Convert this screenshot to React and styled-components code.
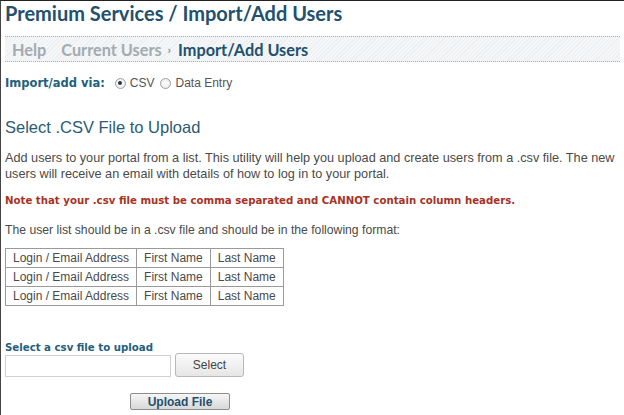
import React from "react";
import styled, { createGlobalStyle } from "styled-components";

const GlobalStyle = createGlobalStyle`
  html, body {
    margin: 0;
    padding: 0;
    background: #fff;
  }
`;

const Page = styled.div`
  width: 624px;
  height: 415px;
  box-sizing: border-box;
  border-top: 1px solid #222;
  border-left: 1px solid #444;
  padding: 0 4px 0 4px;
  overflow: hidden;
  font-family: "Liberation Sans", Arial, sans-serif;
  color: #4a4a4a;
`;

const Title = styled.h1`
  margin: 0;
  font-family: Lato, "Open Sans", sans-serif;
  font-weight: 700;
  font-size: 20px;
  line-height: 24px;
  color: #22506e;
`;

const Crumbs = styled.div`
  margin-top: 11px;
  height: 24px;
  display: flex;
  align-items: center;
  gap: 15px;
  padding-left: 7px;
  border-top: 1px dotted #a8adb1;
  border-bottom: 1px dotted #a8adb1;
  background: repeating-linear-gradient(
    135deg,
    #f4f6f8 0px,
    #f4f6f8 2px,
    #eceff2 2px,
    #eceff2 3px
  );
  font-family: Lato, "Open Sans", sans-serif;
  font-weight: 700;
  font-size: 16.3px;
`;

const Crumb = styled.span`
  color: ${(p) => (p.$active ? "#22506e" : "#a3abb1")};
`;

const Sep = styled.span`
  color: #8a949b;
  font-size: 12px;
  margin: 0 -8px 0 -9px;
`;

const ViaRow = styled.div`
  margin-top: 14px;
  display: flex;
  align-items: center;
  gap: 4px;
  font-size: 12px;
`;

const ViaLabel = styled.span`
  font-family: "DejaVu Sans", Verdana, sans-serif;
  font-weight: 700;
  font-size: 11.5px;
  color: #22607c;
  margin-right: 6px;
`;

const Radio = styled.span`
  width: 9px;
  height: 9px;
  border-radius: 50%;
  border: 1px solid #9aa2a8;
  background: radial-gradient(circle, #fff 0, #e4e7ea 100%);
  display: inline-flex;
  align-items: center;
  justify-content: center;
  &::after {
    content: "";
    width: 4px;
    height: 4px;
    border-radius: 50%;
    background: ${(p) => (p.$checked ? "#333" : "transparent")};
  }
`;

const RadioText = styled.span`
  color: #555;
  margin-right: 2px;
`;

const Heading = styled.h2`
  margin: 27px 0 0;
  font-weight: 400;
  font-size: 16.5px;
  line-height: 20px;
  color: #2a5b76;
`;

const Para = styled.p`
  margin: ${(p) => p.$mt} 0 0;
  font-size: ${(p) => p.$size};
  line-height: 16px;
  color: #4a4a4a;
  white-space: nowrap;
`;

const Note = styled.p`
  margin: 12px 0 0;
  font-family: "DejaVu Sans", Verdana, sans-serif;
  font-weight: 700;
  font-size: 10.2px;
  line-height: 14px;
  color: #a8321f;
`;

const Table = styled.table`
  margin-top: 10px;
  border-collapse: collapse;
  font-size: 12px;
  color: #4a4a4a;
  td {
    border: 1px solid #9a9a9a;
    height: 18px;
    padding: 0 7px;
    text-align: center;
  }
`;

const UploadLabel = styled.div`
  margin-top: 36px;
  font-family: "DejaVu Sans", Verdana, sans-serif;
  font-weight: 700;
  font-size: 10.2px;
  color: #22607c;
`;

const PickRow = styled.div`
  display: flex;
  align-items: flex-start;
  gap: 4px;
`;

const FileInput = styled.div`
  margin-top: 2px;
  width: 164px;
  height: 20px;
  border: 1px solid #d0d0d0;
  background: #fff;
`;

const SelectButton = styled.button`
  width: 69px;
  height: 24px;
  border: 1px solid #b8b8b8;
  border-radius: 3px;
  background: linear-gradient(#fbfbfb, #e6e6e6);
  font-family: "Liberation Sans", Arial, sans-serif;
  font-size: 12px;
  color: #444;
  padding: 0;
`;

const UploadButton = styled.button`
  display: block;
  margin: 16px 0 0 125px;
  width: 100px;
  height: 17px;
  padding: 0;
  border: 1px solid #8e8e8e;
  border-radius: 2px;
  background: linear-gradient(#f6f6f6, #d8d8d8);
  font-family: "Liberation Sans", Arial, sans-serif;
  font-weight: 700;
  font-size: 12px;
  color: #22506e;
`;

const rows = [0, 1, 2];

export default function App() {
  return (
    <>
      <GlobalStyle />
      <Page>
        <Title>Premium Services / Import/Add Users</Title>
        <Crumbs>
          <Crumb>Help</Crumb>
          <Crumb>Current Users</Crumb>
          <Sep>›</Sep>
          <Crumb $active>Import/Add Users</Crumb>
        </Crumbs>
        <ViaRow>
          <ViaLabel>Import/add via:</ViaLabel>
          <Radio $checked />
          <RadioText>CSV</RadioText>
          <Radio />
          <RadioText>Data Entry</RadioText>
        </ViaRow>
        <Heading>Select .CSV File to Upload</Heading>
        <Para $mt="13px" $size="12.7px">
          Add users to your portal from a list. This utility will help you upload and create users from a .csv file. The new
          <br />
          users will receive an email with details of how to log in to your portal.
        </Para>
        <Note>Note that your .csv file must be comma separated and CANNOT contain column headers.</Note>
        <Para $mt="14px" $size="12.2px">
          The user list should be in a .csv file and should be in the following format:
        </Para>
        <Table>
          <tbody>
            {rows.map((r) => (
              <tr key={r}>
                <td>Login / Email Address</td>
                <td>First Name</td>
                <td>Last Name</td>
              </tr>
            ))}
          </tbody>
        </Table>
        <UploadLabel>Select a csv file to upload</UploadLabel>
        <PickRow>
          <FileInput />
          <SelectButton>Select</SelectButton>
        </PickRow>
        <UploadButton>Upload File</UploadButton>
      </Page>
    </>
  );
}
